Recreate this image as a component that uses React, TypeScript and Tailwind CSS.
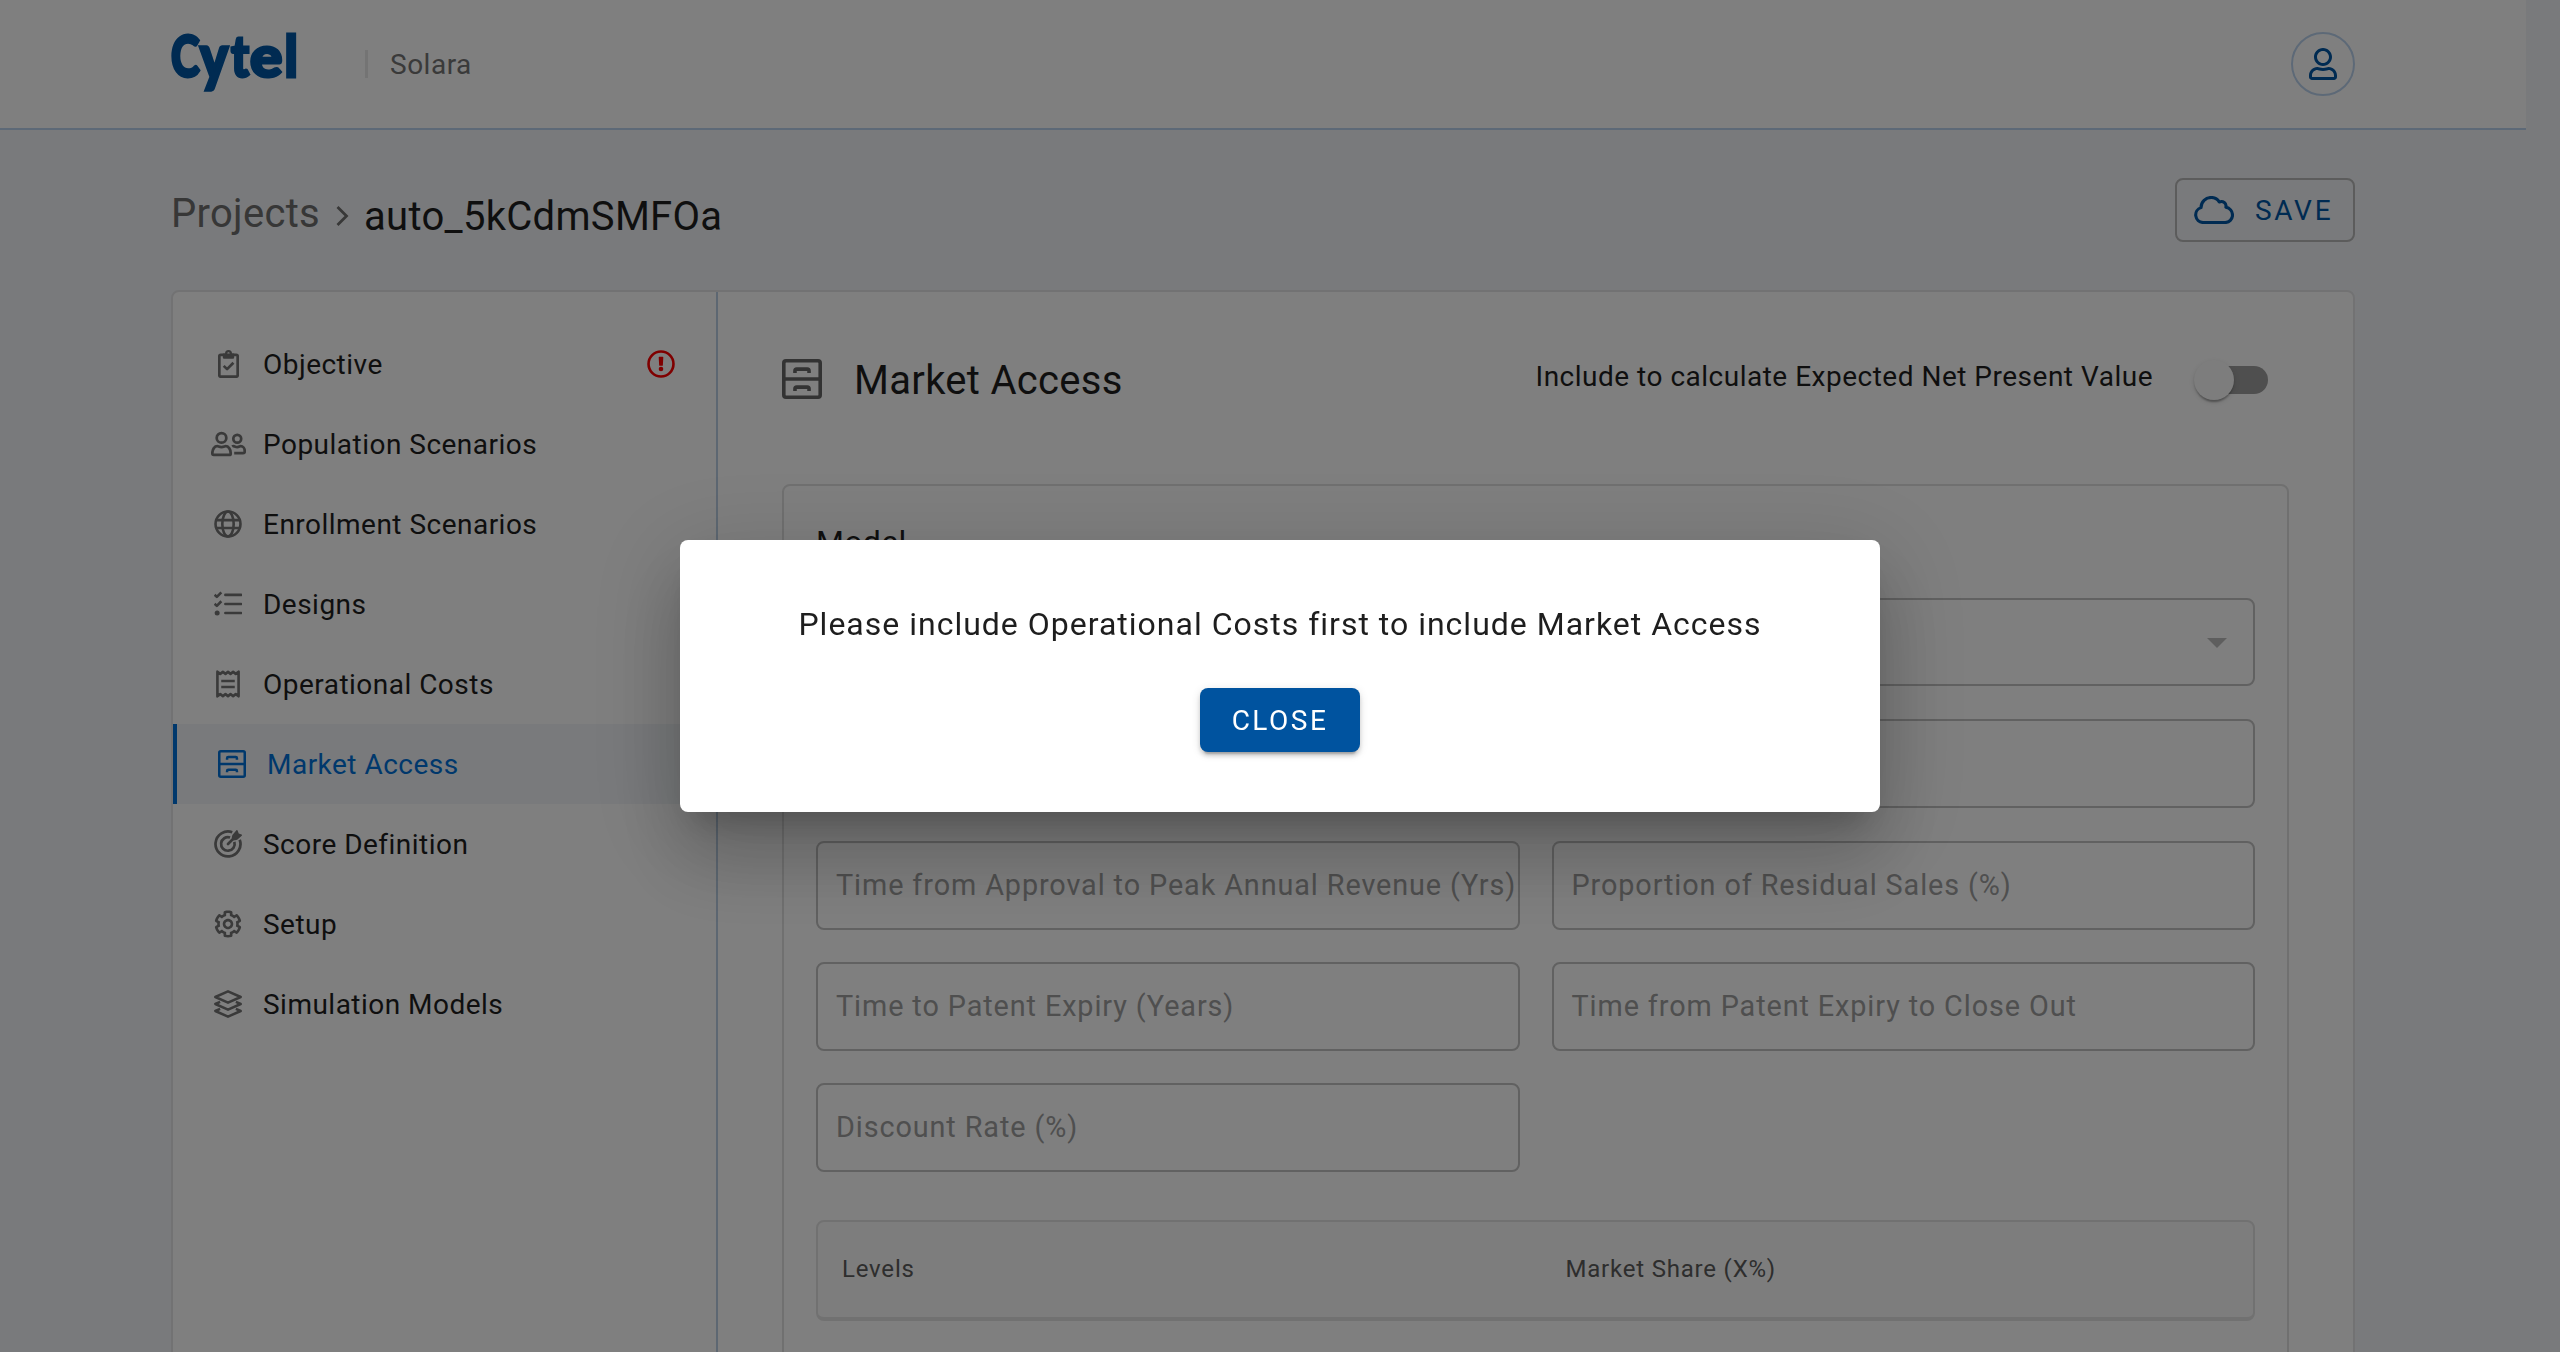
import type { ReactNode } from "react";
import { FaRegUser } from "react-icons/fa";

type IconProps = { className?: string };

function StrokeIcon({ box, className, width = 46, children }: { box: string; className?: string; width?: number; children: ReactNode }) {
  return (
    <svg viewBox={box} className={className} fill="none" stroke="currentColor" strokeWidth={width} strokeLinejoin="round">
      {children}
    </svg>
  );
}

const ClipboardCheckIcon = () => (
  <StrokeIcon box="0 0 384 512" className="h-7 w-[21px]" width={50}>
    <rect x="24" y="88" width="336" height="400" rx="24" />
    <path stroke="none" fill="currentColor" fillRule="evenodd" d="M128 64a64 64 0 0 1 128 0h40v72a24 24 0 0 1-24 24H112a24 24 0 0 1-24-24V64zM192 42a22 22 0 1 0 0 44 22 22 0 0 0 0-44z" />
    <path d="M104 290l62 60 116-116" />
  </StrokeIcon>
);

const UsersIcon = () => (
  <StrokeIcon box="0 0 640 512" className="h-7 w-[35px]" width={50}>
    <circle cx="192" cy="144" r="88" />
    <path d="M24 424c0-76 44-128 91-128 19 0 36 16 77 16s58-16 77-16c47 0 91 52 91 128v8a24 24 0 0 1-24 24H48a24 24 0 0 1-24-24z" />
    <circle cx="480" cy="160" r="72" />
    <path d="M388 304c10-8 22-10 34-6 18 6 36 14 58 14 32 0 44-16 62-16 44 0 74 38 74 84v16a28 28 0 0 1-28 28H424" />
  </StrokeIcon>
);

const GlobeIcon = () => (
  <StrokeIcon box="0 0 512 512" className="size-7" width={48}>
    <circle cx="256" cy="256" r="228" />
    <ellipse cx="256" cy="256" rx="104" ry="228" />
    <path d="M42 184h428M42 328h428" />
  </StrokeIcon>
);

const TasksIcon = () => (
  <StrokeIcon box="0 0 512 512" className="size-7" width={48}>
    <path d="M10 88l42 38 82-84M10 252l42 38 82-84" />
    <circle cx="58" cy="420" r="46" stroke="none" fill="currentColor" />
    <path d="M208 90h288M208 256h288M208 420h288" strokeLinecap="round" />
  </StrokeIcon>
);

const ReceiptIcon = () => (
  <StrokeIcon box="0 0 440 512" className="h-7 w-6" width={48}>
    <path d="M26 30l52 40 48-36 48 36 46-36 46 36 48-36 48 36 52-40v452l-52-40-48 36-48-36-46 36-46-36-48 36-48-36-52 40z" />
    <path d="M96 200h248M96 312h248" />
  </StrokeIcon>
);

const CabinetIcon = ({ className }: IconProps) => (
  <StrokeIcon box="0 0 512 512" className={className} width={46}>
    <rect x="23" y="23" width="466" height="466" rx="28" />
    <path d="M22 256h468" />
    <path d="M166 178v-26a22 22 0 0 1 22-22h136a22 22 0 0 1 22 22v26M166 408v-26a22 22 0 0 1 22-22h136a22 22 0 0 1 22 22v26" />
  </StrokeIcon>
);

const TargetIcon = () => (
  <StrokeIcon box="0 0 512 512" className="size-7" width={50}>
    <path d="M470 178A228 228 0 1 1 334 42" />
    <path d="M372 218A124 124 0 1 1 294 138" />
    <path d="M256 256L400 112" strokeLinecap="round" />
    <path stroke="none" fill="currentColor" d="M326 128l10-38 74-84c8-8 18-6 22 4l20 52 52 20c10 4 12 14 4 22l-84 74-38 10-60 4z" />
  </StrokeIcon>
);

const GearIcon = () => (
  <svg viewBox="0 0 512 512" className="size-7" fill="currentColor">
    <path d="M452.515 237l31.843-18.382c9.426-5.441 13.996-16.542 11.177-27.054-11.404-42.531-33.842-80.547-64.058-110.797-7.68-7.688-19.575-9.246-28.985-3.811l-31.785 18.358a196.276 196.276 0 0 0-32.899-19.02V39.541a24.016 24.016 0 0 0-17.842-23.206c-41.761-11.107-86.117-11.121-127.93-.001-10.519 2.798-17.844 12.321-17.844 23.206v36.753a196.276 196.276 0 0 0-32.899 19.02l-31.785-18.358c-9.41-5.435-21.305-3.877-28.985 3.811-30.216 30.25-52.653 68.265-64.057 110.797-2.818 10.512 1.751 21.613 11.177 27.054L59.485 237a197.715 197.715 0 0 0 0 37.999l-31.843 18.382c-9.426 5.441-13.996 16.542-11.177 27.054 11.404 42.531 33.842 80.547 64.058 110.797 7.68 7.688 19.575 9.246 28.985 3.811l31.785-18.358a196.202 196.202 0 0 0 32.899 19.019v36.753a24.016 24.016 0 0 0 17.842 23.206c41.761 11.107 86.117 11.122 127.93.001 10.519-2.798 17.844-12.321 17.844-23.206v-36.753a196.34 196.34 0 0 0 32.899-19.019l31.785 18.358c9.41 5.435 21.305 3.877 28.985-3.811 30.216-30.25 52.653-68.266 64.057-110.797 2.818-10.512-1.751-21.613-11.177-27.054L452.515 275c1.22-12.65 1.22-25.35 0-38zm-52.679 63.019l43.819 25.289a200.138 200.138 0 0 1-33.849 58.528l-43.829-25.309c-31.984 27.397-36.659 30.077-76.168 44.029v50.599a200.917 200.917 0 0 1-67.618 0v-50.599c-39.504-13.95-44.196-16.642-76.168-44.029l-43.829 25.309a200.15 200.15 0 0 1-33.849-58.528l43.819-25.289c-7.63-41.299-7.634-46.719 0-88.038l-43.819-25.289c7.85-21.229 19.31-41.049 33.849-58.529l43.829 25.309c31.984-27.397 36.66-30.078 76.168-44.029V58.845a200.917 200.917 0 0 1 67.618 0v50.599c39.504 13.95 44.196 16.642 76.168 44.029l43.829-25.309a200.143 200.143 0 0 1 33.849 58.529l-43.819 25.289c7.631 41.3 7.634 46.718 0 88.037zM256 160c-52.935 0-96 43.065-96 96s43.065 96 96 96 96-43.065 96-96-43.065-96-96-96zm0 144c-26.468 0-48-21.532-48-48 0-26.467 21.532-48 48-48s48 21.533 48 48c0 26.468-21.532 48-48 48z" />
  </svg>
);

const LayersIcon = () => (
  <StrokeIcon box="0 0 512 512" className="size-7" width={46}>
    <path d="M256 24l232 104-232 104L24 128z" />
    <path d="M112 216l-88 40 232 104 232-104-88-40" />
    <path d="M112 344l-88 40 232 104 232-104-88-40" />
  </StrokeIcon>
);

const AlertIcon = () => (
  <svg viewBox="0 0 512 512" className="size-7 text-[#ff0000]" fill="currentColor">
    <circle cx="256" cy="256" r="228" fill="none" stroke="currentColor" strokeWidth="48" />
    <path d="M214 138a12 12 0 0 1 12-13h60a12 12 0 0 1 12 13l-8 140a12 12 0 0 1-12 11h-44a12 12 0 0 1-12-11z" />
    <circle cx="256" cy="348" r="42" />
  </svg>
);

const CloudIcon = () => (
  <StrokeIcon box="0 0 640 448" className="h-7 w-10" width={50}>
    <path d="M144 424A122 122 0 0 1 112 186C114 92 186 24 276 24c54 0 100 26 128 72 58-26 122 22 106 82 62 14 106 66 106 128a118 118 0 0 1-118 118z" />
  </StrokeIcon>
);

const Logo = () => (
  <svg
    width="128"
    height="72"
    viewBox="0 0 128 72"
    className="overflow-visible font-['Lato',sans-serif] text-[57px] font-black"
    fill="#0056a4"
    stroke="#0056a4"
    strokeWidth="3"
    role="img"
    aria-label="Cytel"
  >
    <text transform="translate(0 49) scale(0.76 1)">C</text>
    <text transform="translate(29 52) scale(0.92 1.1)">y</text>
    <text transform="translate(60 49) scale(0.84 1)">t</text>
    <text transform="translate(79 49) scale(1.06 1)">e</text>
    <text transform="translate(113.5 49) scale(0.92 1)">l</text>
  </svg>
);

const navItems: { label: string; icon: ReactNode; active?: boolean; alert?: boolean }[] = [
  { label: "Objective", icon: <ClipboardCheckIcon />, alert: true },
  { label: "Population Scenarios", icon: <UsersIcon /> },
  { label: "Enrollment Scenarios", icon: <GlobeIcon /> },
  { label: "Designs", icon: <TasksIcon /> },
  { label: "Operational Costs", icon: <ReceiptIcon /> },
  { label: "Market Access", icon: <CabinetIcon className="size-7" />, active: true },
  { label: "Score Definition", icon: <TargetIcon /> },
  { label: "Setup", icon: <GearIcon /> },
  { label: "Simulation Models", icon: <LayersIcon /> },
];

function Field({ label }: { label?: string }) {
  return (
    <div className="flex h-[89px] items-center rounded-lg border-2 border-[#c2c2c2] pt-px pl-[18px] text-[28.8px] tracking-[0.9px] whitespace-nowrap text-[#9e9e9e]">
      {label}
    </div>
  );
}

function Header() {
  return (
    <header className="h-[130px] w-[2526px] border-b-2 border-[#bbd3ee] bg-white">
      <div className="mx-[171px] flex h-full items-center">
        <Logo />
        <span className="ml-[66px] h-7 w-[3px] bg-[#e8e8e8]" />
        <span className="mt-[2px] ml-[22px] text-[28px] tracking-[0.5px] text-[#757575]">Solara</span>
        <div className="ml-auto flex size-16 items-center justify-center rounded-full border-2 border-[#bbd3ee]">
          <FaRegUser className="size-8 text-[#0056a4]" />
        </div>
      </div>
    </header>
  );
}

function Sidebar() {
  return (
    <nav className="w-[545px] shrink-0 border-r-2 border-[#bbcfe4] pt-8">
      {navItems.map((item) => (
        <div
          key={item.label}
          className={
            item.active
              ? "flex h-20 items-center border-l-4 border-[#0071d8] bg-[#f2f5f8] pl-[33px] text-[#0071d8]"
              : "flex h-20 items-center pl-[33px] text-[#1e1e1e]"
          }
        >
          <span className={item.active ? "flex w-11 justify-center" : "flex w-11 justify-center text-[#757575]"}>{item.icon}</span>
          <span className="mt-[2px] ml-[13px] text-[28px] tracking-[0.48px]">{item.label}</span>
          {item.alert && (
            <span className="mr-[41px] ml-auto">
              <AlertIcon />
            </span>
          )}
        </div>
      ))}
    </nav>
  );
}

function MarketAccess() {
  return (
    <main className="flex-1 px-16 pt-16">
      <div className="flex h-12 items-center">
        <CabinetIcon className="-mt-[2px] size-10 text-[#666666]" />
        <h1 className="mt-[2px] ml-8 text-[40px] leading-none tracking-[0.3px] text-[#1e1e1e]">Market Access</h1>
        <span className="-mt-[7px] mr-[41px] ml-auto text-[28px] tracking-[0.5px] text-[#1e1e1e]">
          Include to calculate Expected Net Present Value
        </span>
        <div className="mr-[21px] flex h-10 w-[74px] items-center justify-end">
          <div className="flex h-7 w-[68px] items-center rounded-full bg-[#9e9e9e]">
            <span className="-ml-[6px] size-10 rounded-full bg-[#fafafa] shadow-[0_4px_2px_-2px_rgba(0,0,0,0.2),0_2px_2px_0_rgba(0,0,0,0.14),0_2px_6px_0_rgba(0,0,0,0.12)]" />
          </div>
        </div>
      </div>
      <section className="mt-20 h-[1000px] rounded-lg border-2 border-[#e0e0e0] p-8">
        <h2 className="h-12 text-[32px] leading-[48px] tracking-[0.3px] text-[#1e1e1e]">Model</h2>
        <div className="mt-8 grid grid-cols-2 gap-x-8 gap-y-[32.25px]">
          <div className="col-span-2 mb-px flex h-[88px] items-center justify-end rounded-lg border-2 border-[#c2c2c2] pt-px pr-[26px]">
            <svg viewBox="0 0 20 10" className="h-[10px] w-5 fill-[#bdbdbd]">
              <path d="M0 0h20L10 10z" />
            </svg>
          </div>
          <Field />
          <Field />
          <Field label="Time from Approval to Peak Annual Revenue (Yrs)" />
          <Field label="Proportion of Residual Sales (%)" />
          <Field label="Time to Patent Expiry (Years)" />
          <Field label="Time from Patent Expiry to Close Out" />
          <Field label="Discount Rate (%)" />
        </div>
        <div className="mt-12 grid h-[101px] grid-cols-2 items-center rounded-lg border-2 border-b-4 border-[#e2e2e2] bg-[#fafafa] pb-px pl-6 text-2xl tracking-[0.8px] text-[#5c5c5c]">
          <span>Levels</span>
          <span className="pl-[18px]">Market Share (X%)</span>
        </div>
      </section>
    </main>
  );
}

function Dialog() {
  return (
    <div className="fixed inset-0 flex items-center justify-center bg-black/50">
      <div
        role="dialog"
        className="flex h-[272px] w-[1200px] flex-col items-center rounded-lg bg-white pt-[60px] shadow-[0_22px_30px_-14px_rgba(0,0,0,0.2),0_48px_76px_6px_rgba(0,0,0,0.14),0_18px_92px_16px_rgba(0,0,0,0.12)]"
      >
        <p className="text-[32px] leading-[48px] tracking-[1px] text-[#1e1e1e]">
          Please include Operational Costs first to include Market Access
        </p>
        <button className="mt-10 h-16 w-40 rounded-lg bg-[#00539f] pt-px text-[28px] tracking-[2.5px] text-white shadow-[0_6px_2px_-4px_rgba(0,0,0,0.2),0_4px_4px_0_rgba(0,0,0,0.14),0_2px_10px_0_rgba(0,0,0,0.12)]">
          CLOSE
        </button>
      </div>
    </div>
  );
}

export default function App() {
  return (
    <div className="h-[1352px] w-[2560px] overflow-hidden bg-[#f3f5f8] font-['Roboto',sans-serif]">
      <Header />
      <div className="mt-12 ml-[171px] w-[2184px]">
        <div className="flex h-16 items-center">
          <span className="mt-[7px] text-[40px] leading-none tracking-[0.3px] text-[#6e6e6e]">Projects</span>
          <svg viewBox="0 0 13 20" className="mt-[12px] ml-[16px] h-5 w-[13px]" fill="none" stroke="#707070" strokeWidth="2.8">
            <path d="M1.5 1l9 9-9 9" />
          </svg>
          <span className="mt-[13px] ml-[15px] text-[40px] leading-none tracking-[0.3px] text-[#1e1e1e]">auto_5kCdmSMFOa</span>
          <button className="ml-auto flex h-16 w-[180px] items-center rounded-lg border-2 border-[#b8b8b8] pl-[17px] text-[28px] tracking-[2.7px] text-[#0056a4]">
            <CloudIcon />
            <span className="mt-px ml-[21px]">SAVE</span>
          </button>
        </div>
        <div className="mt-12 flex h-[1300px] rounded-lg border-2 border-[#e4e5e7] bg-white">
          <Sidebar />
          <MarketAccess />
        </div>
      </div>
      <Dialog />
    </div>
  );
}
